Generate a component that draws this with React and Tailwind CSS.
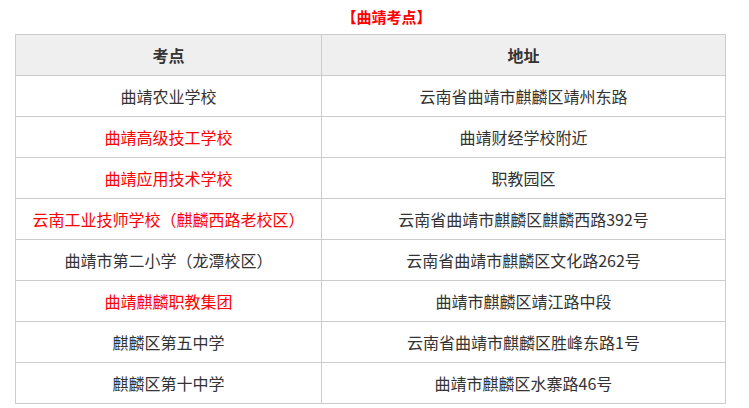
import React from "react";

const rows = [
  ["曲靖农业学校", "云南省曲靖市麒麟区靖州东路", false],
  ["曲靖高级技工学校", "曲靖财经学校附近", true],
  ["曲靖应用技术学校", "职教园区", true],
  ["云南工业技师学校（麒麟西路老校区）", "云南省曲靖市麒麟区麒麟西路392号", true],
  ["曲靖市第二小学（龙潭校区）", "云南省曲靖市麒麟区文化路262号", false],
  ["曲靖麒麟职教集团", "曲靖市麒麟区靖江路中段", true],
  ["麒麟区第五中学", "云南省曲靖市麒麟区胜峰东路1号", false],
  ["麒麟区第十中学", "曲靖市麒麟区水寨路46号", false],
];

const App = () => {
  return (
    <div className="w-[749px] h-[408px] bg-white font-['Noto_Sans_CJK_SC',sans-serif] text-[16px] text-[#333]">
      <div className="pt-[6px] h-[34px] pl-[24px] text-center text-[15px] font-bold text-[#ff0000] leading-[22px]">
        【曲靖考点】
      </div>
      <table className="ml-[15px] w-[711px] border-collapse border border-[#ccc]">
        <thead>
          <tr className="bg-[#efefef] h-[41px]">
            <th className="w-[306px] border border-[#ccc] font-bold">考点</th>
            <th className="border border-[#ccc] font-bold">地址</th>
          </tr>
        </thead>
        <tbody>
          {rows.map(([name, addr, red]) => (
            <tr key={name} className="h-[41px]">
              <td className={"border border-[#ccc] text-center " + (red ? "text-[#ff0000]" : "")}>{name}</td>
              <td className="border border-[#ccc] text-center">{addr}</td>
            </tr>
          ))}
        </tbody>
      </table>
    </div>
  );
};

export default App;
